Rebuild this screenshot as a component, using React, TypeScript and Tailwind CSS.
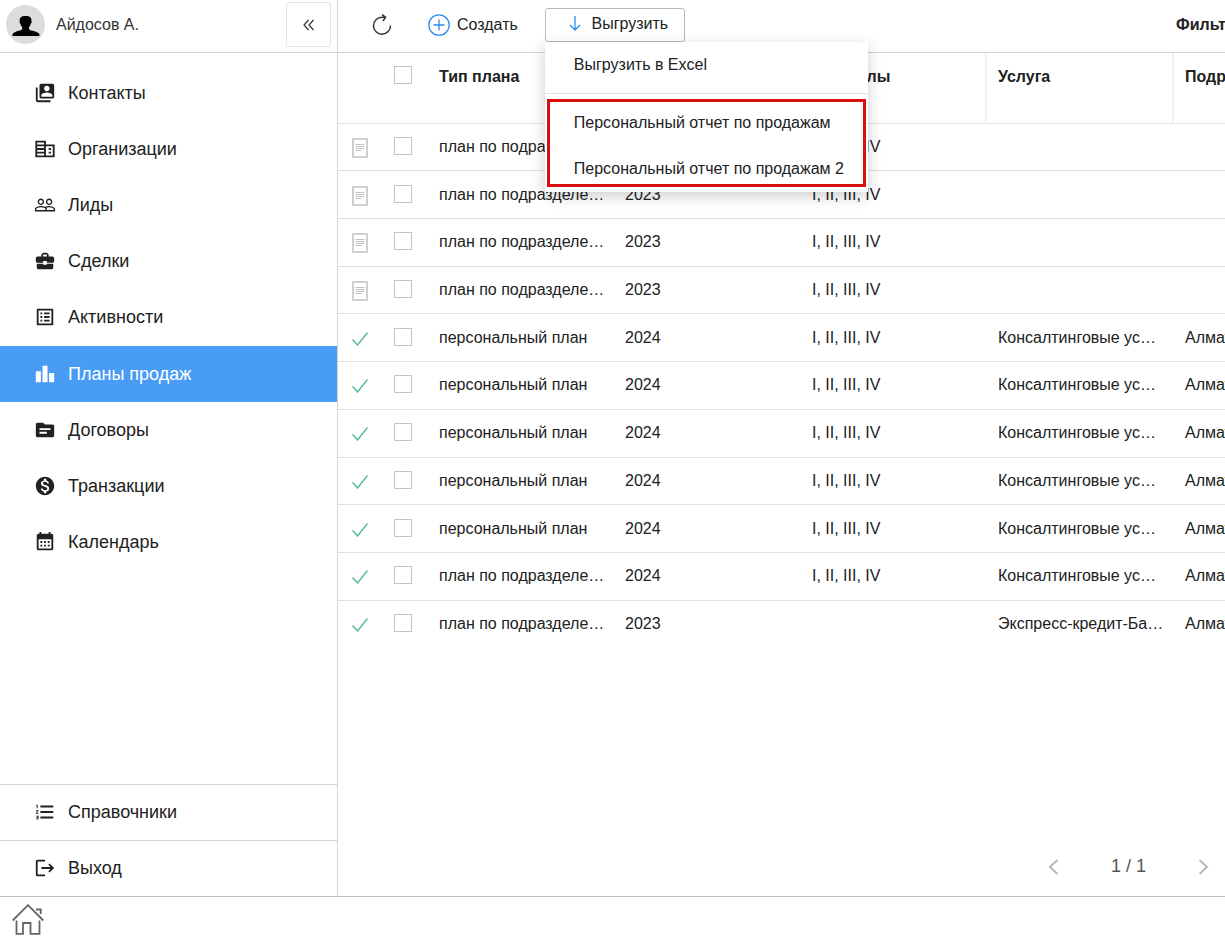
import { useState } from 'react';
import type { ComponentType } from 'react';
import {
    MdBusinessCenter,
    MdFormatListNumbered,
    MdLeaderboard,
    MdListAlt,
    MdLogout,
    MdMonetizationOn,
    MdPeopleOutline,
    MdSource,
    MdSwitchAccount,
} from 'react-icons/md';

type MenuItem = { label: string; icon: ComponentType<{ className?: string }> };

type Plan = {
    id: number;
    approved: boolean;
    type: string;
    year: string;
    quarters: string;
    service: string;
    department: string;
};

const OfficeIcon = ({ className }: { className?: string }) => (
    <svg viewBox="0 0 24 24" fill="none" stroke="currentColor" strokeWidth="2" className={className}>
        <path d="M2.500 4H12v16H2.500zM2.500 8H12M2.500 12H12M2.500 16H12M12 8h9.500v12H12M16 12h2.500M16 16h2.500" />
    </svg>
);

const CalendarIcon = ({ className }: { className?: string }) => (
    <svg viewBox="0 0 24 24" fill="currentColor" className={className}>
        <path d="M9 11v2H7v-2h2m4 0v2h-2v-2h2m4 0v2h-2v-2h2m2-8a2 2 0 0 1 2 2v14a2 2 0 0 1-2 2H5a2 2 0 0 1-2-2V5a2 2 0 0 1 2-2h1V1h2v2h8V1h2v2h1m0 16V9H5v10h14M9 15v2H7v-2h2m4 0v2h-2v-2h2m4 0v2h-2v-2h2z" />
    </svg>
);

const menu: MenuItem[] = [
    { label: 'Контакты', icon: MdSwitchAccount },
    { label: 'Организации', icon: OfficeIcon },
    { label: 'Лиды', icon: MdPeopleOutline },
    { label: 'Сделки', icon: MdBusinessCenter },
    { label: 'Активности', icon: MdListAlt },
    { label: 'Планы продаж', icon: MdLeaderboard },
    { label: 'Договоры', icon: MdSource },
    { label: 'Транзакции', icon: MdMonetizationOn },
    { label: 'Календарь', icon: CalendarIcon },
];

const bottomMenu: MenuItem[] = [
    { label: 'Справочники', icon: MdFormatListNumbered },
    { label: 'Выход', icon: MdLogout },
];

const ALL = 'I, II, III, IV';
const DEP = 'план по подразделению';
const PERS = 'персональный план';
const CONS = 'Консалтинговые услуги';

const plans: Plan[] = [
    { id: 1, approved: false, type: DEP, year: '2023', quarters: ALL, service: '', department: '' },
    { id: 2, approved: false, type: DEP, year: '2023', quarters: ALL, service: '', department: '' },
    { id: 3, approved: false, type: DEP, year: '2023', quarters: ALL, service: '', department: '' },
    { id: 4, approved: false, type: DEP, year: '2023', quarters: ALL, service: '', department: '' },
    { id: 5, approved: true, type: PERS, year: '2024', quarters: ALL, service: CONS, department: 'Алматы' },
    { id: 6, approved: true, type: PERS, year: '2024', quarters: ALL, service: CONS, department: 'Алматы' },
    { id: 7, approved: true, type: PERS, year: '2024', quarters: ALL, service: CONS, department: 'Алматы' },
    { id: 8, approved: true, type: PERS, year: '2024', quarters: ALL, service: CONS, department: 'Алматы' },
    { id: 9, approved: true, type: PERS, year: '2024', quarters: ALL, service: CONS, department: 'Алматы' },
    { id: 10, approved: true, type: DEP, year: '2024', quarters: ALL, service: CONS, department: 'Алматы' },
    { id: 11, approved: true, type: DEP, year: '2023', quarters: '', service: 'Экспресс-кредит-Банкинг', department: 'Алматы' },
];

const checkboxClass = 'block size-[18px] appearance-none border border-[#c4c4c4] bg-white checked:bg-[#489cf4]';
const cellClass = 'truncate pr-[9px] pl-3';

const DraftIcon = () => (
    <svg width="16" height="20" viewBox="0 0 16 20" fill="none" stroke="#c2c2c2" aria-label="Черновик">
        <rect x="1" y="1" width="14" height="18" stroke="#d0d0d0" strokeWidth="2" />
        <path d="M3.500 6.500h9M3.500 8.500h9M3.500 10.500h9M3.500 12.500h6" />
    </svg>
);

const ApprovedIcon = () => (
    <svg width="16" height="14" viewBox="0 0 16 14" fill="none" stroke="#4dba87" strokeWidth="1.300" aria-label="Утвержден">
        <path d="M.5 7.500l5 5.500L15.500.5" />
    </svg>
);

const SidebarLink = ({ item, active, onClick }: { item: MenuItem; active?: boolean; onClick?: () => void }) => {
    const Icon = item.icon;
    return (
        <a
            href="#"
            onClick={onClick}
            className={`flex h-full items-center gap-3 pb-px pl-[34px] text-lg ${active ? 'bg-[#489cf4] text-white' : 'text-[#212121]'}`}
        >
            <Icon className="size-[22px]" />
            {item.label}
        </a>
    );
};

const Sidebar = () => {
    const [active, setActive] = useState('Планы продаж');

    return (
        <aside className="flex w-[338px] shrink-0 flex-col border-r border-[#d4d4d4]">
            <div className="flex h-[53px] shrink-0 items-center border-b border-[#d4d4d4] pr-1.5 pb-[3px] pl-1.5">
                <svg width="39" height="39" viewBox="0 0 39 39" aria-hidden="true">
                    <circle cx="19.500" cy="19.500" r="19.500" fill="#dcdcdc" />
                    <path d="M13.800 16c-.5-3 1.200-5 5.800-5s6.300 2 5.800 5c.5.500.2 2.200-.6 2.700-.3 1.500-1 2.600-1.800 3.300v2.200c1 1.800 10.500 2 10.500 5.500v1.300H6.500v-1.300c0-3.500 8.700-3.700 9.700-5.500V22c-.8-.7-1.500-1.800-1.800-3.300-.8-.5-1.100-2.200-.6-2.700z" />
                </svg>
                <span className="ml-[11px] flex-1 text-base text-[#333]">Айдосов А.</span>
                <button aria-label="Свернуть меню" className="flex size-[45px] items-center justify-center rounded-[3px] border border-[#e2e2e2]">
                    <svg width="12" height="12" viewBox="0 0 12 12" fill="none" stroke="#333" strokeWidth="1.200">
                        <path d="M5.500 1L1 6l4.500 5M10.500 1L6 6l4.500 5" />
                    </svg>
                </button>
            </div>
            <nav className="mt-3 grid h-[506px] shrink-0 auto-rows-fr">
                {menu.map((item) => (
                    <SidebarLink key={item.label} item={item} active={active === item.label} onClick={() => setActive(item.label)} />
                ))}
            </nav>
            <div className="mt-auto">
                {bottomMenu.map((item) => (
                    <div key={item.label} className="h-14 border-t border-[#d4d4d4]">
                        <SidebarLink item={item} />
                    </div>
                ))}
            </div>
        </aside>
    );
};

const ExportMenu = () => {
    const [open, setOpen] = useState(true);

    return (
        <div className="relative ml-[27px]">
            <button
                onClick={() => setOpen(!open)}
                className="flex h-[34px] w-[140px] items-center justify-center gap-2.5 rounded-[3px] border border-[#b8b8b8] pb-0.5 pl-2"
            >
                <svg width="12" height="15" viewBox="0 0 12 15" fill="none" stroke="#2f8cf0" strokeWidth="1.300">
                    <path d="M6 0v14M1 9l5 5 5-5" />
                </svg>
                Выгрузить
            </button>
            {open && (
                <div className="absolute top-full left-0 z-10 w-[323px] bg-white pb-[5px] shadow-[0_4px_14px_rgba(0,0,0,0.2)]">
                    <button className="block h-[51px] w-full pb-1 pl-[29px] text-left">Выгрузить в Excel</button>
                    <div className="border-t border-[#e0e0e0] px-0.5 pt-[5px]">
                        <div className="border-3 border-[#d90f0f]">
                            <button className="block h-[42px] w-full pl-6 text-left">Персональный отчет по продажам</button>
                            <button className="block h-10 w-full pt-2.5 pl-6 text-left">Персональный отчет по продажам 2</button>
                        </div>
                    </div>
                </div>
            )}
        </div>
    );
};

const Toolbar = () => (
    <div className="flex h-[53px] shrink-0 items-center border-b border-[#d4d4d4] pb-[3px] pl-[34px] whitespace-nowrap">
        <button aria-label="Обновить">
            <svg width="20" height="21" viewBox="0 0 20 21" fill="none" stroke="#333" strokeWidth="1.500">
                <path d="M18.500 11.500A8.500 8.500 0 1 1 10 3.200h3.500M10 .5l3.500 2.700L11 7" />
            </svg>
        </button>
        <button className="ml-9 flex items-center gap-[7px]">
            <svg width="22" height="22" viewBox="0 0 22 22" fill="none" stroke="#2f8cf0" strokeWidth="1.300">
                <circle cx="11" cy="11" r="10.200" />
                <path d="M11 5.500v11M5.500 11h11" />
            </svg>
            Создать
        </button>
        <ExportMenu />
        <button className="ml-auto w-[49px] overflow-hidden text-left font-bold">Фильтр</button>
    </div>
);

const columns = ['Тип плана', 'Год', 'Кварталы', 'Услуга', 'Подразделение'];

const PlansTable = () => {
    const [selected, setSelected] = useState<number[]>([]);

    const toggle = (id: number) => {
        setSelected(selected.includes(id) ? selected.filter((s) => s !== id) : [...selected, id]);
    };

    return (
        <div className="overflow-hidden">
            <table className="h-[594px] w-[1022px] table-fixed border-collapse text-left">
                <colgroup>
                    <col className="w-[44px]" />
                    <col className="w-[45px]" />
                    <col className="w-[186px]" />
                    <col className="w-[187px]" />
                    <col className="w-[186px]" />
                    <col className="w-[187px]" />
                    <col className="w-[187px]" />
                </colgroup>
                <thead>
                    <tr className="h-[70px] border-b border-[#e0e0e0] align-top">
                        <td />
                        <td className="pt-[13px] pl-3">
                            <input
                                type="checkbox"
                                aria-label="Выбрать все"
                                className={checkboxClass}
                                checked={selected.length === plans.length}
                                onChange={(e) => setSelected(e.target.checked ? plans.map((p) => p.id) : [])}
                            />
                        </td>
                        {columns.map((name, i) => (
                            <th key={name} className={`pt-3 font-bold ${i > 0 ? 'border-l-2 border-l-[#f0f0f0] pl-[11px]' : 'pl-3'}`}>
                                {name}
                            </th>
                        ))}
                    </tr>
                </thead>
                <tbody>
                    {plans.map((plan) => (
                        <tr key={plan.id} className="border-b border-[#e0e0e0] last:border-b-0">
                            <td className="pt-0.5 pl-3.5">{plan.approved ? <ApprovedIcon /> : <DraftIcon />}</td>
                            <td className="pb-0.5 pl-3">
                                <input
                                    type="checkbox"
                                    aria-label={`Выбрать план ${plan.id}`}
                                    className={checkboxClass}
                                    checked={selected.includes(plan.id)}
                                    onChange={() => toggle(plan.id)}
                                />
                            </td>
                            <td className="truncate pr-1.5 pl-3">{plan.type}</td>
                            <td className={cellClass}>{plan.year}</td>
                            <td className={cellClass}>{plan.quarters}</td>
                            <td className={cellClass}>{plan.service}</td>
                            <td className={cellClass}>{plan.department}</td>
                        </tr>
                    ))}
                </tbody>
            </table>
        </div>
    );
};

const Pagination = () => (
    <div className="mt-auto flex h-[59px] shrink-0 items-center justify-end pr-4 text-lg text-[#555]">
        <button aria-label="Предыдущая страница">
            <svg width="11" height="16" viewBox="0 0 11 16" fill="none" stroke="#b8b8b8" strokeWidth="2">
                <path d="M9.500 1L2 8l7.500 7" />
            </svg>
        </button>
        <span className="w-[139px] pb-0.5 text-center">1 / 1</span>
        <button aria-label="Следующая страница">
            <svg width="11" height="16" viewBox="0 0 11 16" fill="none" stroke="#b8b8b8" strokeWidth="2">
                <path d="M1.500 1L9 8l-7.500 7" />
            </svg>
        </button>
    </div>
);

export default function App() {
    return (
        <div className="flex h-screen flex-col overflow-hidden bg-white font-['Liberation_Sans',Arial,sans-serif] text-base text-[#212121]">
            <div className="flex min-h-0 flex-1">
                <Sidebar />
                <main className="flex min-w-0 flex-1 flex-col">
                    <Toolbar />
                    <PlansTable />
                    <Pagination />
                </main>
            </div>
            <footer className="flex h-11 shrink-0 items-center border-t border-[#c0c0c0] pt-0.5 pl-3">
                <a href="#" aria-label="Главная">
                    <svg width="32" height="31" viewBox="0 0 32 31" fill="none" stroke="#666" strokeWidth="1.800">
                        <path d="M.7 16.500L16 1.200l15.300 15.300M4.500 16.500v13.300H11V19h7.500v10.800H27.500V16.500M24 5.500h4.800V10" />
                    </svg>
                </a>
            </footer>
        </div>
    );
}
